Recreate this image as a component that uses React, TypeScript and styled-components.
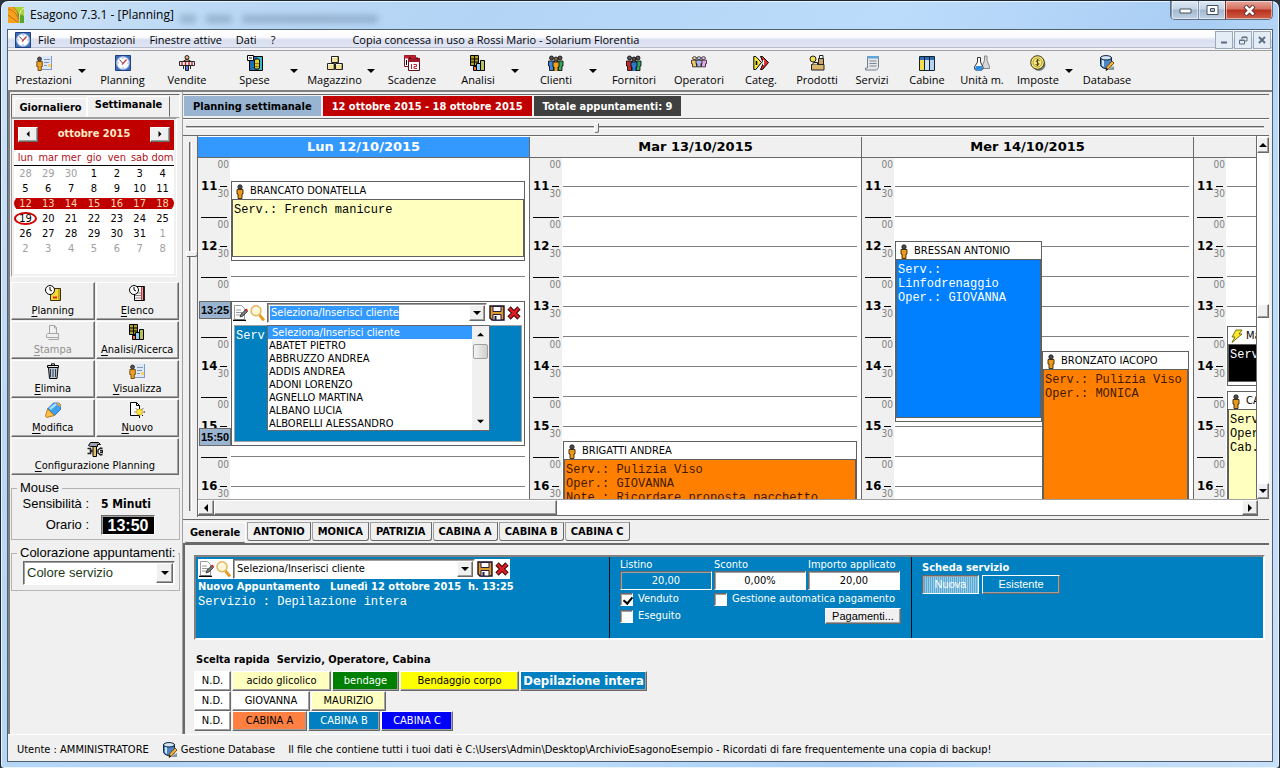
import React from "react";
import styled, { createGlobalStyle, css } from "styled-components";

const UI = '"DejaVu Sans Condensed", "DejaVu Sans", sans-serif';
const SEGOE = '"Open Sans", "Noto Sans", sans-serif';
const ARIAL = '"Liberation Sans", Arial, sans-serif';
const MONO = '"Liberation Mono", "Courier New", monospace';

const c = {
  face: "#f0f0f0",
  dark: "#696969",
  mid: "#a0a0a0",
  blue: "#0080c0",
  red: "#c00000",
  chip: "#99b4d1",
  highlight: "#3399ff",
  cream: "#ffffc0",
};

const raised = css`
  border: 1px solid;
  border-color: #ffffff #696969 #696969 #ffffff;
  box-shadow: inset -1px -1px 0 #a0a0a0;
`;
const sunken = css`
  border: 1px solid;
  border-color: #696969 #ffffff #ffffff #696969;
  box-shadow: inset 1px 1px 0 #a0a0a0;
`;

const Global = createGlobalStyle`
  * { box-sizing: border-box; }
  html, body { margin: 0; background: #2a3440; }
  body { font: 11px/14px ${UI}; color: #000; }
  button, input, select { font: inherit; color: inherit; margin: 0; padding: 0; border-radius: 0; }
  svg { display: block; flex: none; }
`;

/* ---------- icons ---------- */

const person = (x: number, body: string, head = "#555") => (
  <g>
    <circle cx={x + 3} cy="3" r="2" fill={head} stroke="#000" strokeWidth=".8" />
    <path d={`M${x} 6h6v5h-1v4.500h-4v-4.500h-1z`} fill={body} stroke="#000" strokeWidth=".8" />
  </g>
);
const clockFace = (
  <g>
    <circle cx="5" cy="5" r="4.500" fill="#fff" stroke="#000" />
    <path d="M5 2v3l2 1" fill="none" stroke="#000" />
  </g>
);
const barsIcon = (
  <g stroke="#000">
    <path d="M.5 .5h8v10h-8z" fill="#b0a020" />
    <path d="M4.500 .5v10M.5 4h8M.5 7h8" />
    <path d="M3.500 11.500h3v4h-3z" fill="#ff6a3a" />
    <path d="M6.500 8.500h4v7h-4z" fill="#8fd0ff" />
    <path d="M10.500 5.500h4v10h-4z" fill="#b9c25a" />
  </g>
);
const docPerson = (
  <g>
    <path d="M6 1h10v14H6z" fill="#dbe9fb" />
    <path d="M15.500 1v14M6 14.500h9" stroke="#7f9ac4" />
    <path d="M8 4.500h6M8 7.500h5M8 10.500h3" stroke="#8297b8" />
    <path d="M12 9h3v3h-3z" fill="#ffd35a" />
    <circle cx="3.500" cy="4" r="2" fill="#555" stroke="#222" strokeWidth=".8" />
    <path d="M.8 6.500h5.500v5h-1V15.500H2v-4H.8z" fill="#f0a020" stroke="#5a3500" strokeWidth=".8" />
  </g>
);
const dbIcon = (
  <g>
    <path d="M10 14l5-3v4h-5z" fill="#7f98a3" />
    <path d="M1.500 2.500v7c0 2 2 4 5.500 4s5.500-2 5.500-4v-7z" fill="#4c86c6" stroke="#12233c" />
    <path d="M3 4v6.500l2 1.500V5z" fill="#cfe6fb" />
    <ellipse cx="7" cy="2.800" rx="5.500" ry="2.200" fill="#d4e6f6" stroke="#12233c" />
    <path d="M7 15.500l1-4 5-5.500 2 2-5 5.500z" fill="#f5b53c" stroke="#5b3500" strokeWidth=".8" />
    <path d="M7 15.500l.7-2.500 1.600 1.500z" fill="#000" />
  </g>
);

const icons: Record<string, React.ReactNode> = {
  logo: (
    <g>
      <path d="M0 0h16v16H0z" fill="#f7a11b" />
      <path d="M6 0h10v9L9 7z" fill="#a9d13a" />
      <path d="M9 6l7 3v7h-5z" fill="#5aa52a" />
      <path d="M0 2c6 1 10 6 11 14M5 0c5 4 7 9 6 16M0 8l11 8" fill="none" stroke="#b5651d" strokeWidth=".8" />
      <path d="M11 16C12 10 10 4 16 1" fill="none" stroke="#e9f5b0" />
    </g>
  ),
  clock: (
    <g>
      <path d="M.5 .5h15v15H.5z" fill="#3f6fbd" stroke="#1e3f83" />
      <circle cx="8" cy="8" r="6.300" fill="#fff" stroke="#a9c3e8" />
      <path d="M4.500 4.500l3.500 4" stroke="#5a4a6a" />
      <path d="M11.500 4.500L8 8.500l-1 1" stroke="#c33" strokeWidth="1.200" />
      <path d="M8 2.500v1M8 12.500v1M2.500 8h1M12.500 8h1" stroke="#5c6f99" />
    </g>
  ),
  docPerson,
  sign: (
    <g stroke="#111" strokeWidth=".9">
      <circle cx="8" cy="2.500" r="2" fill="#d9b38c" />
      <path d="M4 6.500l4-2.500 4 2.500z" fill="#c9895a" />
      <path d="M.5 6.500h15v4H.5z" fill="#f2f2f2" />
      <path d="M3 7v3M6.500 7v3M10 7v3M13 7v3" stroke="#c22" strokeWidth="1.400" />
      <path d="M6.500 10.500h3v5h-3z" fill="#5572c8" />
      <path d="M4.500 11v3M11.500 11v3" />
    </g>
  ),
  expense: (
    <g>
      <path d="M2.500 1.500h13v14h-13z" fill="#1c6fb5" stroke="#000" />
      <path d="M10 2h5v13h-3z" fill="#39b7c8" />
      <path d="M7.500 5c0-1.500 5-1.500 5 0v8c0 1.500-5 1.500-5 0z" fill="#e3d02c" stroke="#000" />
      <path d="M7.500 8c1 1 4 1 5 0M7.500 11c1 1 4 1 5 0" fill="none" stroke="#77690a" />
      <path d="M.5 .5h6v5h-6z" fill="#fff" stroke="#000" />
      <path d="M2 3h3" stroke="#000" />
    </g>
  ),
  boxes: (
    <g stroke="#222">
      <path d="M4.500 1.500h7v6h-7z" fill="#efe4a2" />
      <path d="M.5 8.500h7v6h-7z" fill="#efe4a2" />
      <path d="M8.500 8.500h7v6h-7z" fill="#efe4a2" />
      <path d="M5 2.500h6M1 9.500h6M9 9.500h6" stroke="#fffbe0" />
      <path d="M10.500 2v5M6.500 9v5M14.500 9v5" stroke="#b7a85c" />
    </g>
  ),
  calendars: (
    <g>
      <path d="M.5 .5h11v11H.5z" fill="#fff" stroke="#7a1420" />
      <path d="M.5 .5h11v3H.5z" fill="#c02030" />
      <path d="M2.500 5v5" stroke="#000" />
      <path d="M4.500 3.500h11v12h-11z" fill="#fff" stroke="#5a1018" />
      <path d="M4 3h12v4H4z" fill="#a01828" />
      <path d="M7.500 9v5M9.500 9.500h3v2h-2.500v2h3" fill="none" stroke="#c02030" />
      <path d="M6 2v2M13 2v2" stroke="#000" />
    </g>
  ),
  bars: barsIcon,
  clients: (
    <g>
      {person(0.5, "#3a86d8")}
      {person(9, "#35a362")}
      <g transform="translate(0 1)">{person(5, "#f0a020", "#8a6a4a")}</g>
    </g>
  ),
  suppliers: (
    <g>
      {person(0.5, "#c62828")}
      {person(9, "#35a362")}
      <g transform="translate(0 1)">{person(5, "#2f78d0", "#4a4a4a")}</g>
    </g>
  ),
  operators: (
    <g transform="translate(0 1) scale(1 .7)">
      {person(0.5, "#f5c46a", "#f5dcb0")}
      {person(9.5, "#e9a6e6", "#f5c8f2")}
      {person(5, "#aab4f0", "#d0d6fa")}
    </g>
  ),
  categ: (
    <g stroke="#000">
      <path d="M.8 1.500h2l5.700 6-5.700 7h-2z" fill="#f2e33a" />
      <path d="M3.500 6v4" strokeWidth="1.600" />
      <path d="M7.500 1.500h2l6 6-6 7h-2l3-6.500z" fill="#e02828" />
      <path d="M10.500 5v5" stroke="#fff" strokeWidth="1.200" />
    </g>
  ),
  products: (
    <g stroke="#222">
      <path d="M9.500 3.500h5v6h-5z" fill="#c9a26b" />
      <path d="M10.500 .5h3.500v3h-3.500z" fill="#fff" />
      <path d="M2.500 9.500h12.500v5.500H2.500z" fill="#d9b66b" />
      <circle cx="4" cy="4" r="3" fill="#f3df4a" />
      <path d="M3.500 9.500l1-2h4v2" fill="#efd9a0" />
    </g>
  ),
  services: (
    <g>
      <path d="M3.500 1.500h11v11l-2 2.500H1.500v-2h2z" fill="#e4e7ea" stroke="#78808a" />
      <path d="M3 1h12v2.500H3z" fill="#63a4d8" />
      <path d="M5.500 6h7M5.500 8.500h7M5.500 11h7" stroke="#7d858e" />
    </g>
  ),
  cabins: (
    <g>
      <path d="M.5 1.500h15v14H.5z" fill="#fff" stroke="#123" />
      <path d="M1 2h14v3H1z" fill="#2f6cb8" />
      <path d="M1 5h4v10H1z" fill="#f6dd4a" />
      <path d="M6 5h4v10H6z" fill="#cfe2f5" />
      <path d="M11 5h4v10h-4z" fill="#b6d2ee" />
      <path d="M5.500 2v13M10.500 2v13" stroke="#123" />
    </g>
  ),
  flasks: (
    <g stroke="#333">
      <path d="M10.500 1v4.500L8 11.500v2h7.500v-2L13 5.500V1z" fill="#d5d9dc" stroke="#888" />
      <path d="M3.500 2.500h3v4.500l2.500 5c.5 2-.5 3-1.500 3H2c-1.500 0-2-1.500-1.500-3l3-5z" fill="#fff" />
      <path d="M2 11h6l1 3-1.500 1.500H2L.9 14z" fill="#2f8de0" stroke="none" />
    </g>
  ),
  coin: (
    <g>
      <circle cx="9" cy="9.500" r="6.500" fill="#76848c" />
      <circle cx="7.500" cy="7.500" r="6.800" fill="#f3e67a" stroke="#3c3610" />
      <circle cx="7.500" cy="7.500" r="4.500" fill="none" stroke="#b39b2a" />
      <path d="M9.500 5.500C7 4 5 6.500 7.500 7.500S9 11 5.500 9.500M7.500 4v7" fill="none" stroke="#4b4210" />
    </g>
  ),
  database: dbIcon,
  planningBook: (
    <g>
      <path d="M5.500 3.500h10v12h-10z" fill="#f0d83a" stroke="#3a3300" />
      <path d="M13 4h2v11h-2z" fill="#c9a81c" />
      <path d="M8 12.500h4" stroke="#e22" strokeWidth="2" />
      {clockFace}
    </g>
  ),
  listBook: (
    <g>
      <path d="M5.500 1.500h10v14h-10z" fill="#fff" stroke="#000" />
      <path d="M12 2h1.500v13H12z" fill="#d33" />
      <path d="M14 2h2v13h-2z" fill="#222" />
      <path d="M6 8h6M6 10.500h6M6 13h6" stroke="#888" />
      {clockFace}
    </g>
  ),
  printer: (
    <g fill="none" stroke="#a5a5a5">
      <path d="M4.500 9.500v-8h5l2 2v6" />
      <path d="M2.500 9.500h11v4h-12v-3zM3.500 15.500h10v-2" />
      <path d="M9.500 1.500v2.500h2.500" />
    </g>
  ),
  trash: (
    <g>
      <path d="M3.500 4.500h9.500l-1 11H4.500z" fill="#b8c6d4" stroke="#000" />
      <path d="M5.500 6v8M8 6v8M10.500 6v8" stroke="#33404c" />
      <path d="M2.500 2.500h11v2h-11z" fill="#dfe7ee" stroke="#000" />
      <path d="M6.500 2V.8h3V2" fill="none" stroke="#000" />
    </g>
  ),
  pencil: (
    <g>
      <path d="M2.500 7l6-6h5.500l1.500 1.500v5L9.500 13.500z" fill="#3fa0ec" stroke="#1a5fa8" strokeWidth=".8" />
      <path d="M5 7l6-5" stroke="#a6dcff" strokeWidth="2.400" />
      <path d="M2.500 7l7 6.500-8 2L.5 14z" fill="#ffc04a" stroke="#a86a10" strokeWidth=".8" />
      <path d="M11 1h3l1.500 1.500v3z" fill="#f7a23a" />
    </g>
  ),
  newDoc: (
    <g>
      <path d="M1.500 .5h6l3 3v10h-9z" fill="#fff" stroke="#000" />
      <path d="M7.500 .5v3h3" fill="none" stroke="#000" />
      <circle cx="10.500" cy="10" r="3" fill="#ffe34d" stroke="#caa000" strokeWidth=".8" />
      <path d="M10.500 4.500v2M10.500 14v2M5.500 10h1M14.500 10h1.500M7 6.500l1 1M14 6.500l-1 1M7 14l1-1M14 14l-1-1" stroke="#000" />
    </g>
  ),
  tools: (
    <g>
      <path d="M3.500 1.500h8l2 2h-3v2H3.500L1.500 4.500z" fill="#99a3ad" stroke="#000" />
      <path d="M.5 7.500h3v2h2M.5 12.500h3v-2h2" fill="none" stroke="#222" strokeWidth="1.600" />
      <path d="M15.500 7.500l-2-.5-2.500 2v3l2.500 2 2-.5M13 9.500h2.500v2H13" fill="none" stroke="#222" strokeWidth="1.400" />
      <path d="M6 5.500h3.500v10H6z" fill="#e2c26a" stroke="#000" />
    </g>
  ),
  edit: (
    <g>
      <path d="M1.500 .5h7l3 3v11h-10z" fill="#fff" stroke="#9a9a9a" />
      <path d="M3 5h5M3 7.500h6M3 10h4" stroke="#9a9a9a" />
      <path d="M0 15.500h13" stroke="#000" strokeWidth="1.600" />
      <path d="M7 12l1-3 5-4.500 1.500 2L10 11z" fill="#777" stroke="#222" strokeWidth=".7" />
      <path d="M12 4.500l1.500-1L15 5.500l-1 1z" fill="#d22" />
    </g>
  ),
  search: (
    <g>
      <path d="M9.500 10l4.500 5.500" stroke="#e89a1a" strokeWidth="2.800" />
      <circle cx="6" cy="5.800" r="5" fill="#fff6d2" stroke="#e2b45c" strokeWidth="1.400" />
      <path d="M4 5c.5-1.500 2-2 3-2" stroke="#fff" strokeWidth="1.500" fill="none" />
    </g>
  ),
  floppy: (
    <g>
      <path d="M1 1h14v14H3l-2-2z" fill="#d99a2e" stroke="#1a0d2a" strokeWidth="1.400" />
      <path d="M4 1.500h8v5H4z" fill="#fff" stroke="#2a1a3c" />
      <path d="M4 9.500h8V15H4z" fill="#fff" stroke="#2a1a3c" />
      <path d="M5.500 11h2v4h-2z" fill="#2a1a3c" />
    </g>
  ),
  cross: (
    <g>
      <path d="M3 3l10 10M13 3L3 13" stroke="#3a0a0a" strokeWidth="4.600" />
      <path d="M3.500 3.500l9 9M12.500 3.500l-9 9" stroke="#dd1a22" strokeWidth="2.600" />
    </g>
  ),
  person: (
    <g>
      <circle cx="8" cy="4" r="2.200" fill="#4a4a4a" stroke="#1a1a1a" strokeWidth=".8" />
      <path d="M5 6.500h6V11h-1v4.500H6V11H5z" fill="#e99a1c" stroke="#3a2400" strokeWidth=".9" />
    </g>
  ),
  bolt: <path d="M8 2h6l-3 4h3L4 14.500 7 9H4z" fill="#ffe92a" stroke="#6a6400" strokeWidth=".9" />,
};

const Icon = ({ name, size = 16 }: { name: string; size?: number }) => (
  <svg width={size} height={size} viewBox="0 0 16 16" aria-hidden="true">
    {icons[name]}
  </svg>
);

const Arrow = ({ dir = "down", size = 8 }: { dir?: "up" | "down" | "left" | "right"; size?: number }) => {
  const d = { down: "M0 2h8l-4 4z", up: "M0 6h8l-4-4z", left: "M6 0v8l-4-4z", right: "M2 0v8l4-4z" }[dir];
  return (
    <svg width={size} height={size} viewBox="0 0 8 8" aria-hidden="true">
      <path d={d} fill="#000" />
    </svg>
  );
};

/* ---------- window frame ---------- */

const Frame = styled.div`
  display: flex;
  flex-direction: column;
  min-height: 100vh;
  padding: 0 6px 6px;
  border: 1px solid #1d2733;
  border-radius: 8px 8px 4px 4px;
  box-shadow: inset 0 0 0 1px #e8f4ff;
  background: linear-gradient(115deg, #cfe3f6 0, #bcd9f5 12%, #b3d4f5 30%, #bcdcfb 55%, #a9cdf3 74%, #bbdafa 82%, #c8e0f8 100%);
`;
const TitleBar = styled.header`
  display: flex;
  height: 28px;
  gap: 6px;
  padding: 0 0 0 1px;
  font: 12px/28px ${SEGOE};
`;
const TitleIcon = styled.span`
  padding-top: 6px;
`;
const TitleText = styled.h1`
  margin: 0;
  font: inherit;
`;
const Smudges = styled.span`
  display: flex;
  gap: 10px;
  align-items: center;
  flex: 1;
  filter: blur(3px);
  opacity: 0.4;
`;
const Smudge = styled.i<{ $w: number }>`
  width: ${(p) => p.$w}px;
  height: 8px;
  margin-top: 8px;
  background: #5b7796;
`;
const WinButtons = styled.div`
  display: flex;
  height: 19px;
  border: 1px solid #5d6f85;
  border-top: 0;
  border-radius: 0 0 5px 5px;
  overflow: hidden;
`;
const WinButton = styled.button<{ $close?: boolean }>`
  display: grid;
  place-items: center;
  width: ${(p) => (p.$close ? 47 : 27)}px;
  border: 0;
  border-left: 1px solid ${(p) => (p.$close ? "#7a2a22" : "#8095ad")};
  box-shadow: inset 0 0 0 1px rgba(255, 255, 255, 0.5);
  background: ${(p) =>
    p.$close
      ? "linear-gradient(#e6a79c, #d5705f 45%, #b8301c 50%, #d0604a)"
      : "linear-gradient(#dce8f4, #c3d4e6 45%, #a3b8cf 50%, #bfd2e6)"};
`;
const Client = styled.div`
  display: flex;
  flex-direction: column;
  flex: 1;
  border: 1px solid #4e5f70;
  background: ${c.face};
`;

/* ---------- menu and toolbar ---------- */

const MenuBar = styled.nav`
  display: flex;
  align-items: center;
  height: 21px;
  padding: 0 1px 0 7px;
  font: 11px/18px ${SEGOE};
  border-bottom: 1px solid ${c.mid};
  box-shadow: inset 0 -2px 0 #f4f4f8, inset 0 -3px 0 #b8bccb;
  background: linear-gradient(#fff 0, #fcfcfe 35%, #d9dff0 50%, #e3e7f5 100%);
`;
const MenuItem = styled.button`
  padding: 0 7px;
  border: 0;
  background: none;
`;
const License = styled.span`
  flex: 1;
  padding-left: 70px;
`;
const MdiButton = styled.button`
  display: grid;
  place-items: center;
  width: 18px;
  height: 18px;
  margin-left: 1px;
  border: 1px solid #9aa9b9;
  background: #e4ecf5;
`;
const Toolbar = styled.div`
  display: flex;
  height: 41px;
  padding-left: 1px;
  border-bottom: 2px solid #808080;
`;
const ToolButton = styled.button<{ $w: number }>`
  display: flex;
  flex-direction: column;
  align-items: center;
  gap: 1px;
  width: ${(p) => p.$w}px;
  padding-top: 4px;
  border: 0;
  background: none;
  font: 11px/16px ${SEGOE};
  white-space: nowrap;
`;
const ToolCaret = styled.button`
  width: 12px;
  padding-top: 1px;
  border: 0;
  background: none;
`;

const tools: { label: string; icon: string; w: number; caret?: boolean }[] = [
  { label: "Prestazioni", icon: "docPerson", w: 69, caret: true },
  { label: "Planning", icon: "clock", w: 65 },
  { label: "Vendite", icon: "sign", w: 64 },
  { label: "Spese", icon: "expense", w: 71, caret: true },
  { label: "Magazzino", icon: "boxes", w: 65, caret: true },
  { label: "Scadenze", icon: "calendars", w: 66 },
  { label: "Analisi", icon: "bars", w: 66, caret: true },
  { label: "Clienti", icon: "clients", w: 66, caret: true },
  { label: "Fornitori", icon: "suppliers", w: 66 },
  { label: "Operatori", icon: "operators", w: 64 },
  { label: "Categ.", icon: "categ", w: 60 },
  { label: "Prodotti", icon: "products", w: 52 },
  { label: "Servizi", icon: "services", w: 58 },
  { label: "Cabine", icon: "cabins", w: 52 },
  { label: "Unità m.", icon: "flasks", w: 58 },
  { label: "Imposte", icon: "coin", w: 54, caret: true },
  { label: "Database", icon: "database", w: 60 },
];

/* ---------- left side ---------- */

const Work = styled.div`
  display: flex;
  flex: 1;
  border-left: 2px solid #808080;
`;
const Side = styled.aside`
  display: flex;
  flex-direction: column;
  width: 173px;
  padding: 2px 2px 0 1px;
  border-right: 1px solid ${c.mid};
`;
const SideTabs = styled.div`
  display: flex;
  align-items: flex-end;
  height: 24px;
  padding: 0 9px 0 2px;
  border: 1px solid;
  border-color: ${c.dark} #fff ${c.mid} ${c.dark};
`;
const SideTab = styled.button<{ $on?: boolean }>`
  width: ${(p) => (p.$on ? 84 : 74)}px;
  height: ${(p) => (p.$on ? 21 : 19)}px;
  padding-bottom: ${(p) => (p.$on ? 3 : 0)}px;
  border: 1px solid;
  border-color: #fff ${(p) => (p.$on ? c.dark : "#fff")} transparent #fff;
  background: ${c.face};
  font-weight: bold;
`;
const CalendarBox = styled.section`
  height: 159px;
  margin: 0 3px 0 0;
  padding: 1px 2px 0;
  border: 1px solid;
  border-color: ${c.mid} #fff #fff ${c.mid};
`;
const CalendarPaper = styled.div`
  height: 154px;
  background: #fff;
`;
const CalendarHead = styled.div`
  display: flex;
  justify-content: space-between;
  align-items: center;
  height: 30px;
  padding: 0 4px 2px;
  background: ${c.red};
  color: #ffe9c8;
  font: bold 11px/16px ${UI};
`;
const CalButton = styled.button`
  display: grid;
  place-items: center;
  width: 20px;
  height: 15px;
  background: ${c.face};
  ${raised}
`;
const CalTable = styled.table`
  width: 100%;
  border-collapse: collapse;
  table-layout: fixed;
  text-align: center;
  th,
  td {
    height: 15px;
    padding: 0;
    line-height: 15px;
    font-weight: normal;
  }
  th {
    color: #b01020;
  }
  thead {
    border-bottom: 1px solid #000;
  }
`;
const Day = styled.td<{ $out?: boolean }>`
  color: ${(p) => (p.$out ? "#a0a0a0" : "#000")};
`;
const WeekRow = styled.tr`
  td {
    background: linear-gradient(#fff 2px, ${c.red} 2px, ${c.red} 13px, #fff 13px);
    color: #ffd9b0;
  }
  td:first-child {
    border-radius: 8px 0 0 8px;
  }
  td:last-child {
    border-radius: 0 8px 8px 0;
  }
`;
const Today = styled.span`
  display: block;
  height: 13px;
  line-height: 10px;
  border: 2px solid #d00000;
  border-radius: 50%;
`;
const Actions = styled.div`
  display: grid;
  grid-template-columns: 1fr 1fr;
  gap: 1px;
  margin: 5px 1px 0 0;
`;
const ActionButton = styled.button<{ $wide?: boolean }>`
  display: flex;
  flex-direction: column;
  align-items: center;
  gap: ${(p) => (p.$wide ? 2 : 3)}px;
  height: ${(p) => (p.$wide ? 37 : 38)}px;
  padding-top: 2px;
  background: ${c.face};
  ${raised}
  ${(p) => p.$wide && "grid-column: span 2;"}
  white-space: nowrap;
  &:disabled {
    color: #909090;
  }
  u {
    text-underline-offset: 2px;
  }
`;
const Group = styled.fieldset`
  min-width: 0;
  margin: 5px 0 0;
  padding: 0 4px 4px 9px;
  border: 1px solid #b4b4b4;
  font: 13px/16px ${ARIAL};
`;
const Legend = styled.legend`
  margin-left: -4px;
  padding: 0 3px;
  white-space: nowrap;
`;
const MouseGrid = styled.dl`
  display: grid;
  grid-template-columns: 68px 1fr;
  align-items: center;
  gap: 3px 12px;
  margin: 0;
  dt {
    text-align: right;
  }
  dd {
    margin: 0;
  }
`;
const Strong = styled.strong`
  font: bold 12px/16px ${UI};
`;
const Clock = styled.output`
  display: inline-block;
  width: 54px;
  height: 20px;
  background: #000;
  color: #fff;
  font: bold 16px/19px ${ARIAL};
  text-align: center;
  ${sunken}
`;
const SelectWrap = styled.div`
  display: grid;
  height: 24px;
  margin: 0 0 1px 2px;
  background: #fff;
  ${sunken}
  > * {
    grid-area: 1 / 1;
  }
`;
const Select = styled.select`
  appearance: none;
  width: 100%;
  padding-left: 3px;
  border: 0;
  background: none;
  color: #1c3a14;
`;
const DropFace = styled.span`
  display: grid;
  place-items: center;
  justify-self: end;
  width: 17px;
  margin: 1px;
  background: ${c.face};
  pointer-events: none;
  ${raised}
`;

/* ---------- planning ---------- */

const Main = styled.main`
  display: flex;
  flex-direction: column;
  flex: 1;
  min-width: 0;
  padding-top: 2px;
`;
const Chips = styled.div`
  display: flex;
  gap: 2px;
  height: 25px;
  margin-right: 3px;
  padding: 1px 1px 2px;
  border-top: 1px solid ${c.dark};
  border-bottom: 1px solid ${c.dark};
`;
const Chip = styled.span<{ $bg: string; $fg: string }>`
  padding: 0 9px;
  background: ${(p) => p.$bg};
  color: ${(p) => p.$fg};
  font: bold 11px/22px ${UI};
  white-space: nowrap;
`;
const HSlider = styled.div`
  display: flex;
  align-items: center;
  height: 17px;
  margin-right: 3px;
  padding: 0 5px 0 3px;
  border-top: 1px solid #fff;
  border-bottom: 1px solid ${c.dark};
`;
const Range = styled.input`
  appearance: none;
  width: 100%;
  height: 11px;
  background: none;
  &::-webkit-slider-runnable-track {
    height: 3px;
    border-top: 1px solid ${c.dark};
    border-bottom: 1px solid #fff;
    background: #c0c0c0;
  }
  &::-webkit-slider-thumb {
    appearance: none;
    width: 5px;
    height: 10px;
    margin-top: -4px;
    border: 1px solid;
    border-color: #fff ${c.dark} ${c.dark} #fff;
    border-radius: 0 0 3px 3px;
    background: ${c.face};
  }
`;
const VRange = styled.input`
  appearance: none;
  writing-mode: vertical-lr;
  width: 13px;
  margin: 6px 0 6px 1px;
  background: none;
  &::-webkit-slider-runnable-track {
    width: 3px;
    border-left: 1px solid ${c.dark};
    border-right: 1px solid #fff;
    background: #c0c0c0;
  }
  &::-webkit-slider-thumb {
    appearance: none;
    width: 12px;
    height: 6px;
    margin-left: -4px;
    border: 1px solid;
    border-color: #fff ${c.dark} ${c.dark} #fff;
    border-radius: 0 3px 3px 0;
    background: ${c.face};
  }
`;
const Scheduler = styled.section`
  display: flex;
  height: 381px;
`;
const Board = styled.div`
  display: flex;
  flex-direction: column;
  flex: 1;
  min-width: 0;
  border-left: 1px solid ${c.dark};
`;
const BoardTop = styled.div`
  display: flex;
  height: 363px;
  margin-right: 3px;
`;
const Days = styled.div`
  display: flex;
  flex: 1;
  min-width: 0;
  overflow: hidden;
  padding-top: 1px;
  background: #fff;
`;
const DayColumn = styled.div`
  display: flex;
  flex-direction: column;
  flex: 0 0 332px;
  border-right: 1px solid ${c.dark};
`;
const DayHead = styled.h2<{ $on?: boolean }>`
  height: 20px;
  margin: 0;
  background: ${(p) => (p.$on ? c.highlight : c.face)};
  color: ${(p) => (p.$on ? "#fff" : "#000")};
  font: bold 13px/20px "DejaVu Sans", sans-serif;
  text-align: center;
`;
const DayBody = styled.div`
  display: grid;
  grid-template-columns: 33px 294px;
  height: 342px;
  overflow: hidden;
  border-top: 1px solid ${c.dark};
  background: linear-gradient(90deg, ${c.face} 32px, #fff 32px);
`;
const HourMarks = styled.div`
  display: grid;
  grid-template-columns: 18px 8px;
  justify-content: space-between;
  height: 60px;
  margin: 0 2px 0 3px;
  font-size: 10px;
  color: #808080;
  background: linear-gradient(#000, #000) left bottom / 26px 1px no-repeat;
`;
const HourLabel = styled.b`
  padding-top: 20px;
  color: #000;
  font: bold 13px/16px "DejaVu Sans Condensed", sans-serif;
`;
const Minutes = styled.div`
  display: flex;
  flex-direction: column;
  justify-self: end;
  align-items: flex-end;
  i {
    width: 7px;
    height: 1px;
    margin: 14px 2px 0 0;
    background: #000;
  }
`;
const Track = styled.div`
  position: relative;
  background: repeating-linear-gradient(transparent 0, transparent 28px, #808080 28px, #808080 29px, transparent 29px, transparent 30px);
`;
/* One minute of the day is one pixel of the track. */
const Appt = styled.article<{ $top: number; $h: number; $half?: "left" | "right" }>`
  position: absolute;
  top: ${(p) => p.$top}px;
  left: ${(p) => (p.$half === "right" ? "50%" : "0")};
  display: flex;
  flex-direction: column;
  width: ${(p) => (p.$half ? "50%" : "100%")};
  height: ${(p) => p.$h}px;
  padding-bottom: 3px;
  border: 1px solid #606060;
  background: #fff;
`;
const ApptHead = styled.h3`
  display: flex;
  align-items: center;
  gap: 2px;
  height: 17px;
  margin: 0;
  font: 11px/17px ${UI};
  white-space: nowrap;
`;
const ApptBody = styled.p<{ $bg: string; $fg: string }>`
  flex: 1;
  margin: 0;
  padding: 3px 1px;
  border: 1px solid #606060;
  background: ${(p) => p.$bg};
  color: ${(p) => p.$fg};
  font: 12px/14px ${MONO};
  white-space: pre-line;
`;
const Draft = styled(Appt)`
  padding: 1px 2px 3px 0;
  background: #fff;
`;
const DraftBody = styled.div`
  flex: 1;
  margin: 2px 0 0 2px;
  padding: 3px 0 0 1px;
  border: 1px solid ${c.mid};
  background: ${c.blue};
  color: #fff;
  font: 12px/14px ${MONO};
`;
const ClientBar = styled.div`
  display: flex;
  align-items: center;
  height: 20px;
  background: #fff;
`;
const IconButton = styled.button`
  display: grid;
  place-items: center;
  width: 17px;
  height: 18px;
  border: 0;
  background: none;
`;
const Combo = styled.div`
  display: flex;
  flex: 1;
  height: 20px;
  margin: 0 1px;
  background: #fff;
  ${sunken}
`;
const ComboInput = styled.input<{ $sel?: boolean }>`
  flex: ${(p) => (p.$sel ? "0 0 129px" : "1")};
  min-width: 0;
  margin: 2px auto 2px 2px;
  padding-left: 1px;
  border: 0;
  outline: 0;
  background: ${(p) => (p.$sel ? c.highlight : "none")};
  color: ${(p) => (p.$sel ? "#fff" : "#000")};
`;
const ComboButton = styled.button`
  display: grid;
  place-items: center;
  width: 16px;
  margin: 1px;
  background: ${c.face};
  ${raised}
`;
const Popup = styled.div`
  position: absolute;
  top: 23px;
  left: 35px;
  display: flex;
  width: 223px;
  height: 106px;
  border: 1px solid ${c.dark};
  background: #fff;
`;
const List = styled.ul`
  flex: 1;
  margin: 0;
  padding: 0;
  list-style: none;
  overflow: hidden;
`;
const Option = styled.li<{ $on?: boolean }>`
  height: 13px;
  padding-left: ${(p) => (p.$on ? 4 : 1)}px;
  font: 11px/13px ${UI};
  background: ${(p) => (p.$on ? c.highlight : "none")};
  color: ${(p) => (p.$on ? "#fff" : "#000")};
  white-space: nowrap;
`;
const ThinBar = styled.div`
  display: flex;
  flex-direction: column;
  align-items: center;
  width: 17px;
  padding: 5px 0;
  background: ${c.face};
`;
const ThinThumb = styled.i`
  width: 15px;
  height: 15px;
  margin: 6px 0 auto;
  border: 1px solid #a0a0a0;
  border-radius: 2px;
  background: linear-gradient(90deg, #f4f4f4, #cfcfcf);
`;
const TimeBadge = styled.time<{ $top: number }>`
  position: absolute;
  top: ${(p) => p.$top}px;
  left: -32px;
  width: 32px;
  height: 18px;
  border: 1px solid ${c.dark};
  background: ${c.chip};
  font: bold 11px/16px ${ARIAL};
  text-align: center;
`;
const VScroll = styled.div`
  display: flex;
  flex-direction: column;
  width: 13px;
  padding-top: 1px;
  border-left: 1px solid ${c.dark};
  background: #fff;
`;
const HScroll = styled.div`
  display: flex;
  height: 17px;
  margin-right: 14px;
  border-top: 1px solid ${c.mid};
  border-bottom: 1px solid ${c.dark};
  background: #fff;
`;
const ScrollButton = styled.button`
  display: grid;
  place-items: center;
  min-width: 12px;
  flex: 0 0 16px;
  background: ${c.face};
  overflow: hidden;
  ${raised}
`;
const Thumb = styled.div<{ $size: number; $before: number }>`
  flex: 0 0 ${(p) => p.$size}px;
  margin-top: ${(p) => p.$before}px;
  background: ${c.face};
  ${raised}
`;
const Fill = styled.span`
  flex: 1;
`;

/* ---------- lower part ---------- */

const Tabs = styled.div`
  display: flex;
  align-items: flex-start;
  gap: 1px;
  height: 26px;
  margin: 2px 3px 0 0;
  padding: 2px 0 0 1px;
  border-top: 1px solid ${c.dark};
  border-bottom: 2px solid ${c.dark};
`;
const Tab = styled.button<{ $on?: boolean }>`
  height: ${(p) => (p.$on ? 21 : 19)}px;
  padding: ${(p) => (p.$on ? "1px 5px 0" : "0 5px")};
  border: 1px solid;
  border-color: ${(p) => (p.$on ? `#fff #fff ${c.dark} ${c.face}` : `${c.mid} ${c.dark} ${c.dark} ${c.mid}`)};
  border-radius: 0 0 3px 3px;
  background: ${c.face};
  font-weight: bold;
  white-space: nowrap;
`;
const Pane = styled.section`
  flex: 1;
  margin-right: 3px;
  padding: 10px 4px 3px 9px;
  border-left: 2px solid ${c.dark};
`;
const BlueBox = styled.div`
  display: flex;
  height: 85px;
  background: ${c.blue};
  color: #fff;
  border: 2px solid;
  border-color: #808080 #fff #fff #808080;
`;
const BlueSection = styled.div<{ $w?: number }>`
  flex: ${(p) => (p.$w ? `0 0 ${p.$w}px` : "1")};
  padding: 2px 8px 0 2px;
  & + & {
    padding: 1px 10px 0 10px;
    border-left: 1px solid #001018;
  }
`;
const BarSlot = styled.div`
  width: 312px;
  color: #000;
`;
const NewAppt = styled.p`
  margin: 0;
  font: bold 11px/16px ${UI};
  white-space: pre;
`;
const ServiceLine = styled.p`
  margin: 0;
  font: 12px/14px ${MONO};
`;
const Prices = styled.div`
  display: grid;
  grid-template-columns: repeat(3, 92px);
  gap: 0 2px;
`;
const Price = styled.label`
  display: block;
  height: 32px;
  line-height: 13px;
  white-space: nowrap;
`;
const PriceInput = styled.input<{ $ro?: boolean }>`
  display: block;
  width: 92px;
  height: 19px;
  text-align: center;
  background: ${(p) => (p.$ro ? c.blue : "#fff")};
  color: ${(p) => (p.$ro ? "#fff" : "#000")};
  ${sunken}
`;
const Checks = styled.div`
  display: grid;
  grid-template-columns: 92px 1fr;
  gap: 2px;
  padding-top: 2px;
`;
const Check = styled.label`
  display: flex;
  align-items: center;
  gap: 5px;
  white-space: nowrap;
`;
const Box = styled.input`
  appearance: none;
  flex: none;
  width: 13px;
  height: 13px;
  background: #fff;
  ${sunken}
  &:checked::after {
    content: "";
    display: block;
    width: 4px;
    height: 7px;
    margin: 1px 0 0 4px;
    border: solid #000;
    border-width: 0 2px 2px 0;
    transform: rotate(40deg);
  }
`;
const Pay = styled.button`
  justify-self: end;
  width: 76px;
  height: 16px;
  background: ${c.face};
  color: #000;
  font: 11px/13px ${ARIAL};
  ${raised}
`;
const CardTitle = styled.h3`
  margin: 3px 0 0;
  font: bold 11px/14px ${UI};
`;
const CardButtons = styled.div`
  display: flex;
  gap: 3px;
`;
const CardButton = styled.button<{ $on?: boolean }>`
  width: ${(p) => (p.$on ? 57 : 78)}px;
  height: 19px;
  color: #fff;
  font: 11px/15px ${ARIAL};
  background: ${(p) => (p.$on ? "repeating-linear-gradient(90deg, #9acbe6 0, #9acbe6 1px, #5aaad6 1px, #5aaad6 2px)" : c.blue)};
  ${(p) => (p.$on ? sunken : raised)}
`;
const QuickTitle = styled.h3`
  margin: 12px 0 4px 2px;
  font: bold 11px/15px ${UI};
  white-space: pre;
`;
const QuickRow = styled.div`
  display: flex;
  gap: 1px;
  height: 20px;
`;
const Quick = styled.button<{ $w: number; $bg: string; $fg?: string; $big?: boolean }>`
  width: ${(p) => p.$w}px;
  background: ${(p) => p.$bg};
  color: ${(p) => p.$fg || "#000"};
  font: ${(p) => (p.$big ? "bold 13px" : "11px")}/16px ${UI};
  white-space: nowrap;
  ${raised}
`;
const Status = styled.footer`
  display: flex;
  align-items: center;
  height: 27px;
  padding: 3px 0 0 9px;
  border-top: 1px solid #fff;
  white-space: nowrap;
`;
const StatusCell = styled.span`
  display: flex;
  align-items: center;
  gap: 3px;
  margin-right: 13px;
`;

const minutes = (h: number, m: number) => (h - 11) * 60 + m - 1;

type Item = {
  name: string;
  icon?: string;
  from: [number, number];
  to: [number, number];
  bg: string;
  fg?: string;
  text: string;
  half?: "left" | "right";
};

const week: { title: string; on?: boolean; items: Item[] }[] = [
  {
    title: "Lun 12/10/2015",
    on: true,
    items: [{ name: "BRANCATO DONATELLA", from: [11, 25], to: [12, 45], bg: c.cream, text: "Serv.: French manicure" }],
  },
  {
    title: "Mar 13/10/2015",
    items: [
      {
        name: "BRIGATTI ANDREA",
        from: [15, 45],
        to: [17, 30],
        bg: "#ff8000",
        fg: "#401800",
        text: "Serv.: Pulizia Viso\nOper.: GIOVANNA\nNote : Ricordare proposta pacchetto",
      },
    ],
  },
  {
    title: "Mer 14/10/2015",
    items: [
      {
        name: "BRESSAN ANTONIO",
        from: [12, 25],
        to: [15, 26],
        bg: "#0080ff",
        fg: "#fff",
        text: "Serv.:\nLinfodrenaggio\nOper.: GIOVANNA",
        half: "left",
      },
      {
        name: "BRONZATO IACOPO",
        from: [14, 15],
        to: [17, 30],
        bg: "#ff8000",
        fg: "#401800",
        text: "Serv.: Pulizia Viso\nOper.: MONICA",
        half: "right",
      },
    ],
  },
  {
    title: "",
    items: [
      { name: "Ma", icon: "bolt", from: [13, 50], to: [14, 50], bg: "#000", fg: "#fff", text: "Serv" },
      { name: "CA", from: [14, 55], to: [17, 30], bg: c.cream, text: "Serv\nOper\nCab." },
    ],
  },
];

const clients = [
  "ABATET PIETRO",
  "ABBRUZZO ANDREA",
  "ADDIS ANDREA",
  "ADONI LORENZO",
  "AGNELLO MARTINA",
  "ALBANO LUCIA",
  "ALBORELLI ALESSANDRO",
];

const month = [
  [28, 29, 30, 1, 2, 3, 4],
  [5, 6, 7, 8, 9, 10, 11],
  [12, 13, 14, 15, 16, 17, 18],
  [19, 20, 21, 22, 23, 24, 25],
  [26, 27, 28, 29, 30, 31, 1],
  [2, 3, 4, 5, 6, 7, 8],
];

const actions = [
  ["Planning", "planningBook"],
  ["Elenco", "listBook"],
  ["Stampa", "printer"],
  ["Analisi/Ricerca", "bars"],
  ["Elimina", "trash"],
  ["Visualizza", "docPerson"],
  ["Modifica", "pencil"],
  ["Nuovo", "newDoc"],
  ["Configurazione Planning", "tools"],
];

const ClientPicker = ({ selected }: { selected?: boolean }) => (
  <ClientBar>
    <IconButton aria-label="Scheda cliente">
      <Icon name="edit" />
    </IconButton>
    <IconButton aria-label="Cerca">
      <Icon name="search" />
    </IconButton>
    <Combo>
      <ComboInput $sel={selected} aria-label="Cliente" defaultValue="Seleziona/Inserisci cliente" />
      <ComboButton aria-label="Apri elenco">
        <Arrow />
      </ComboButton>
    </Combo>
    <IconButton aria-label="Salva">
      <Icon name="floppy" />
    </IconButton>
    <IconButton aria-label="Annulla">
      <Icon name="cross" />
    </IconButton>
  </ClientBar>
);

/* On the day being edited the time badges take the place of these marks. */
const badgeOnLabel = [13];
const badgeOnHalf = [13, 15];

const DayView = ({ day }: { day: (typeof week)[number] }) => (
  <DayColumn>
    <DayHead $on={day.on}>{day.title}</DayHead>
    <DayBody>
      <div>
        {[11, 12, 13, 14, 15, 16].map((h) => (
          <HourMarks key={h}>
            <HourLabel>{day.on && badgeOnLabel.includes(h) ? "" : h}</HourLabel>
            <Minutes>
              <span>00</span>
              <i />
              {day.on && badgeOnHalf.includes(h) ? null : <span>30</span>}
            </Minutes>
          </HourMarks>
        ))}
      </div>
      <Track>
        {day.items.map((a) => (
          <Appt
            key={a.name}
            $top={minutes(a.from[0], a.from[1]) - 1}
            $h={minutes(a.to[0], a.to[1]) - minutes(a.from[0], a.from[1])}
            $half={a.half}
          >
            <ApptHead>
              <Icon name={a.icon || "person"} />
              {a.name}
            </ApptHead>
            <ApptBody $bg={a.bg} $fg={a.fg || "#000"}>
              {a.text}
            </ApptBody>
          </Appt>
        ))}
        {day.on && (
          <>
            <Draft $top={minutes(13, 25) - 1} $h={145}>
              <ClientPicker selected />
              <DraftBody>Serv</DraftBody>
              <Popup>
                <List role="listbox" aria-label="Clienti">
                  <Option role="option" aria-selected $on>
                    Seleziona/Inserisci cliente
                  </Option>
                  {clients.map((n) => (
                    <Option key={n} role="option">
                      {n}
                    </Option>
                  ))}
                </List>
                <ThinBar>
                  <Arrow dir="up" size={7} />
                  <ThinThumb />
                  <Arrow size={7} />
                </ThinBar>
              </Popup>
            </Draft>
            <TimeBadge $top={minutes(13, 25) - 1}>13:25</TimeBadge>
            <TimeBadge $top={minutes(15, 32) - 1}>15:50</TimeBadge>
          </>
        )}
      </Track>
    </DayBody>
  </DayColumn>
);

export default function App() {
  return (
    <>
      <Global />
      <Frame>
        <TitleBar>
          <TitleIcon>
            <Icon name="logo" />
          </TitleIcon>
          <TitleText>Esagono 7.3.1 - [Planning]</TitleText>
          <Smudges aria-hidden="true">
            <Smudge $w={16} />
            <Smudge $w={26} />
            <Smudge $w={136} />
          </Smudges>
          <WinButtons>
            <WinButton aria-label="Riduci a icona">
              <svg width="13" height="7" viewBox="0 0 13 7">
                <path d="M1 2h11v4H1z" fill="#fff" stroke="#44505f" />
              </svg>
            </WinButton>
            <WinButton aria-label="Ingrandisci">
              <svg width="13" height="10" viewBox="0 0 13 10">
                <path d="M1 .5h11v9H1zM4.500 3.500h4v3h-4z" fill="#fff" fillRule="evenodd" stroke="#44505f" />
              </svg>
            </WinButton>
            <WinButton $close aria-label="Chiudi">
              <svg width="13" height="11" viewBox="0 0 13 11">
                <path d="M2 1l9 9M11 1l-9 9" stroke="#5a3030" strokeWidth="4.500" />
                <path d="M2.500 1.500l8 8M10.500 1.500l-8 8" stroke="#fff" strokeWidth="2.500" />
              </svg>
            </WinButton>
          </WinButtons>
        </TitleBar>

        <Client>
          <MenuBar>
            <Icon name="clock" />
            <MenuItem>File</MenuItem>
            <MenuItem>Impostazioni</MenuItem>
            <MenuItem>Finestre attive</MenuItem>
            <MenuItem>Dati</MenuItem>
            <MenuItem>?</MenuItem>
            <License>Copia concessa in uso a Rossi Mario - Solarium Florentia</License>
            <MdiButton aria-label="Riduci">
              <svg width="8" height="8" viewBox="0 0 8 8">
                <path d="M1 6.500h6" stroke="#5c6d80" strokeWidth="2" />
              </svg>
            </MdiButton>
            <MdiButton aria-label="Ripristina">
              <svg width="9" height="9" viewBox="0 0 9 9" fill="none" stroke="#5c6d80">
                <path d="M3 3V1h5v4H6M.5 4.500h5v3.500h-5zM.5 4h5M3 1.500h5" />
              </svg>
            </MdiButton>
            <MdiButton aria-label="Chiudi finestra">
              <svg width="8" height="8" viewBox="0 0 8 8">
                <path d="M1 1l6 6M7 1L1 7" stroke="#5c6d80" strokeWidth="2" />
              </svg>
            </MdiButton>
          </MenuBar>

          <Toolbar>
            {tools.map((t) => (
              <React.Fragment key={t.label}>
                <ToolButton $w={t.w}>
                  <Icon name={t.icon} />
                  {t.label}
                </ToolButton>
                {t.caret && (
                  <ToolCaret aria-label={`Altro: ${t.label}`}>
                    <Arrow />
                  </ToolCaret>
                )}
              </React.Fragment>
            ))}
          </Toolbar>

          <Work>
            <Side>
              <SideTabs>
                <SideTab>Giornaliero</SideTab>
                <SideTab $on>Settimanale</SideTab>
              </SideTabs>
              <CalendarBox>
                <CalendarPaper>
                  <CalendarHead>
                    <CalButton aria-label="Mese precedente">
                      <Arrow dir="left" size={6} />
                    </CalButton>
                    ottobre 2015
                    <CalButton aria-label="Mese successivo">
                      <Arrow dir="right" size={6} />
                    </CalButton>
                  </CalendarHead>
                  <CalTable>
                    <thead>
                      <tr>
                        {["lun", "mar", "mer", "gio", "ven", "sab", "dom"].map((d) => (
                          <th key={d}>{d}</th>
                        ))}
                      </tr>
                    </thead>
                    <tbody>
                      {month.map((w, r) => {
                        const Row = r === 2 ? WeekRow : "tr";
                        return (
                          <Row key={r}>
                            {w.map((d, i) =>
                              r === 2 ? (
                                <td key={i}>{d}</td>
                              ) : (
                                <Day key={i} $out={(r === 0 && d > 7) || (r > 3 && d < 9)}>
                                  {r === 3 && i === 0 ? <Today>{d}</Today> : d}
                                </Day>
                              )
                            )}
                          </Row>
                        );
                      })}
                    </tbody>
                  </CalTable>
                </CalendarPaper>
              </CalendarBox>

              <Actions>
                {actions.map(([label, icon]) => (
                  <ActionButton key={label} disabled={label === "Stampa"} $wide={icon === "tools"}>
                    <Icon name={icon} />
                    <span>
                      <u>{label[0]}</u>
                      {label.slice(1)}
                    </span>
                  </ActionButton>
                ))}
              </Actions>

              <Group>
                <Legend>Mouse</Legend>
                <MouseGrid>
                  <dt>Sensibilità :</dt>
                  <dd>
                    <Strong>5 Minuti</Strong>
                  </dd>
                  <dt>Orario :</dt>
                  <dd>
                    <Clock>13:50</Clock>
                  </dd>
                </MouseGrid>
              </Group>
              <Group>
                <Legend>Colorazione appuntamenti:</Legend>
                <SelectWrap>
                  <Select aria-label="Colorazione appuntamenti">
                    <option>Colore servizio</option>
                  </Select>
                  <DropFace>
                    <Arrow />
                  </DropFace>
                </SelectWrap>
              </Group>
            </Side>

            <Main>
              <Chips>
                <Chip $bg={c.chip} $fg="#000">
                  Planning settimanale
                </Chip>
                <Chip $bg={c.red} $fg="#fff">
                  12 ottobre 2015 - 18 ottobre 2015
                </Chip>
                <Chip $bg="#404040" $fg="#fff">
                  Totale appuntamenti: 9
                </Chip>
              </Chips>
              <HSlider>
                <Range type="range" aria-label="Larghezza colonne" defaultValue={38} />
              </HSlider>
              <Scheduler>
                <VRange type="range" aria-label="Altezza righe" defaultValue={30} />
                <Board>
                  <BoardTop>
                    <Days>
                      {week.map((d, i) => (
                        <DayView key={i} day={d} />
                      ))}
                    </Days>
                    <VScroll>
                      <ScrollButton aria-label="Su">
                        <Arrow dir="up" />
                      </ScrollButton>
                      <Thumb $size={14} $before={151} />
                      <Fill />
                      <ScrollButton aria-label="Giù">
                        <Arrow />
                      </ScrollButton>
                    </VScroll>
                  </BoardTop>
                  <HScroll>
                    <ScrollButton aria-label="Sinistra">
                      <Arrow dir="left" />
                    </ScrollButton>
                    <Thumb $size={343} $before={0} />
                    <Fill />
                    <ScrollButton aria-label="Destra">
                      <Arrow dir="right" />
                    </ScrollButton>
                  </HScroll>
                </Board>
              </Scheduler>

              <Tabs>
                <Tab $on>Generale</Tab>
                {["ANTONIO", "MONICA", "PATRIZIA", "CABINA A", "CABINA B", "CABINA C"].map((t) => (
                  <Tab key={t}>{t}</Tab>
                ))}
              </Tabs>
              <Pane>
                <BlueBox>
                  <BlueSection $w={413}>
                    <BarSlot>
                      <ClientPicker />
                    </BarSlot>
                    <NewAppt>{"Nuovo Appuntamento   Lunedì 12 ottobre 2015  h. 13:25"}</NewAppt>
                    <ServiceLine>Servizio : Depilazione intera</ServiceLine>
                  </BlueSection>
                  <BlueSection $w={302}>
                    <Prices>
                      <Price>
                        Listino
                        <PriceInput $ro readOnly defaultValue="20,00" />
                      </Price>
                      <Price>
                        Sconto
                        <PriceInput defaultValue="0,00%" />
                      </Price>
                      <Price>
                        Importo applicato
                        <PriceInput defaultValue="20,00" />
                      </Price>
                    </Prices>
                    <Checks>
                      <Check>
                        <Box type="checkbox" defaultChecked />
                        Venduto
                      </Check>
                      <Check>
                        <Box type="checkbox" />
                        Gestione automatica pagamento
                      </Check>
                      <Check>
                        <Box type="checkbox" />
                        Eseguito
                      </Check>
                      <Pay>Pagamenti...</Pay>
                    </Checks>
                  </BlueSection>
                  <BlueSection>
                    <CardTitle>Scheda servizio</CardTitle>
                    <CardButtons>
                      <CardButton $on>Nuova</CardButton>
                      <CardButton>Esistente</CardButton>
                    </CardButtons>
                  </BlueSection>
                </BlueBox>

                <QuickTitle>{"Scelta rapida  Servizio, Operatore, Cabina"}</QuickTitle>
                <QuickRow>
                  <Quick $w={37} $bg="#fff">N.D.</Quick>
                  <Quick $w={99} $bg={c.cream}>acido glicolico</Quick>
                  <Quick $w={67} $bg="#008000" $fg="#fff">bendage</Quick>
                  <Quick $w={119} $bg="#ffff00">Bendaggio corpo</Quick>
                  <Quick $w={127} $bg={c.blue} $fg="#fff" $big>Depilazione intera</Quick>
                </QuickRow>
                <QuickRow>
                  <Quick $w={37} $bg="#fff">N.D.</Quick>
                  <Quick $w={78} $bg="#fff">GIOVANNA</Quick>
                  <Quick $w={75} $bg={c.cream}>MAURIZIO</Quick>
                </QuickRow>
                <QuickRow>
                  <Quick $w={37} $bg="#fff">N.D.</Quick>
                  <Quick $w={75} $bg="#ff8040">CABINA A</Quick>
                  <Quick $w={72} $bg={c.blue} $fg="#fff">CABINA B</Quick>
                  <Quick $w={72} $bg="#0000ff" $fg="#fff">CABINA C</Quick>
                </QuickRow>
              </Pane>
            </Main>
          </Work>

          <Status>
            <StatusCell>Utente : AMMINISTRATORE</StatusCell>
            <StatusCell>
              <Icon name="database" />
              Gestione Database
            </StatusCell>
            <StatusCell>
              Il file che contiene tutti i tuoi dati è C:\Users\Admin\Desktop\ArchivioEsagonoEsempio - Ricordati di fare
              frequentemente una copia di backup!
            </StatusCell>
          </Status>
        </Client>
      </Frame>
    </>
  );
}
